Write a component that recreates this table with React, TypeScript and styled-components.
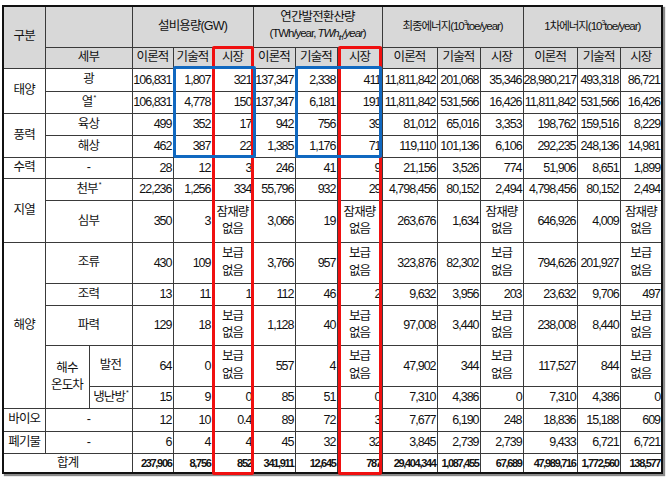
import React from 'react';
import styled, { createGlobalStyle } from 'styled-components';

const GlobalStyle = createGlobalStyle`
  html, body {
    margin: 0;
    padding: 0;
    background: #ffffff;
  }
  body {
    font-family: "Liberation Sans", "Noto Sans CJK KR", sans-serif;
    color: #111111;
  }
`;

type Value = string;

type DataRow = {
  key: string;
  height: number;
  lead: React.ReactNode;
  values: Value[];
};

const NOTES = ['잠재량없음', '보급없음'];

const widths = [42, 44, 43, 41, 39, 41, 42, 42, 45, 55, 43, 43, 54, 43, 42];

const Sup = styled.sup`
  font-size: 7px;
  vertical-align: top;
  position: relative;
  top: -1px;
  margin-left: 1px;
`;

const Page = styled.div`
  padding: 5px 0 0 2px;
`;

const Frame = styled.div`
  position: relative;
  display: inline-block;
`;

const Grid = styled.table`
  border-collapse: collapse;
  table-layout: fixed;
  width: 659px;
  border: 2px solid #111111;
  box-shadow: 2px 2px 1px #8a8a8a;
  font-size: 12.5px;
  letter-spacing: -0.07em;
`;

const Row = styled.tr<{ $h: number }>`
  height: ${(p) => p.$h}px;
`;

const HeadCell = styled.th`
  background: #d8d8d8;
  border: 1px solid #3a3a3a;
  font-weight: 400;
  text-align: center;
  vertical-align: middle;
  padding: 0;
  line-height: 1.25;
  white-space: nowrap;
`;

const Unit = styled.span`
  font-size: 11.5px;
  letter-spacing: -0.09em;
`;

const LabelCell = styled.td`
  border: 1px solid #3a3a3a;
  text-align: center;
  vertical-align: middle;
  padding: 0;
  line-height: 1.3;
  white-space: nowrap;
`;

const NumCell = styled.td<{ $total?: boolean }>`
  border: 1px solid #3a3a3a;
  text-align: right;
  vertical-align: middle;
  padding: 0 1px 0 0;
  white-space: nowrap;
  font-weight: ${(p) => (p.$total ? 700 : 400)};
  font-size: ${(p) => (p.$total ? '11px' : '12.5px')};
  letter-spacing: ${(p) => (p.$total ? '-0.12em' : '-0.08em')};
`;

const NoteCell = styled.td`
  border: 1px solid #3a3a3a;
  text-align: center;
  vertical-align: middle;
  padding: 0;
  line-height: 1.4;
  white-space: nowrap;
`;

const Mark = styled.div<{ $tone: 'red' | 'blue' }>`
  position: absolute;
  box-sizing: border-box;
  border: 3px solid ${(p) => (p.$tone === 'red' ? '#f01010' : '#1068c0')};
  border-radius: 2px;
  z-index: ${(p) => (p.$tone === 'red' ? 1 : 2)};
  pointer-events: none;
`;

const noteText = (v: string) =>
  v === '잠재량없음' ? (
    <>
      잠재량
      <br />
      없음
    </>
  ) : (
    <>
      보급
      <br />
      없음
    </>
  );

const Values = ({ values, total }: { values: Value[]; total?: boolean }) => (
  <>
    {values.map((v, i) =>
      NOTES.includes(v) ? (
        <NoteCell key={i}>{noteText(v)}</NoteCell>
      ) : (
        <NumCell key={i} $total={total}>
          {v}
        </NumCell>
      )
    )}
  </>
);

const rows: DataRow[] = [
  {
    key: 'pv',
    height: 23,
    lead: (
      <>
        <LabelCell rowSpan={2}>태양</LabelCell>
        <LabelCell colSpan={2}>광</LabelCell>
      </>
    ),
    values: ['106,831', '1,807', '321', '137,347', '2,338', '411', '11,811,842', '201,068', '35,346', '28,980,217', '493,318', '86,721'],
  },
  {
    key: 'heat',
    height: 22,
    lead: (
      <LabelCell colSpan={2}>
        열<Sup>*</Sup>
      </LabelCell>
    ),
    values: ['106,831', '4,778', '150', '137,347', '6,181', '191', '11,811,842', '531,566', '16,426', '11,811,842', '531,566', '16,426'],
  },
  {
    key: 'land',
    height: 22,
    lead: (
      <>
        <LabelCell rowSpan={2}>풍력</LabelCell>
        <LabelCell colSpan={2}>육상</LabelCell>
      </>
    ),
    values: ['499', '352', '17', '942', '756', '39', '81,012', '65,016', '3,353', '198,762', '159,516', '8,229'],
  },
  {
    key: 'sea',
    height: 22,
    lead: <LabelCell colSpan={2}>해상</LabelCell>,
    values: ['462', '387', '22', '1,385', '1,176', '71', '119,110', '101,136', '6,106', '292,235', '248,136', '14,981'],
  },
  {
    key: 'hydro',
    height: 21,
    lead: (
      <>
        <LabelCell>수력</LabelCell>
        <LabelCell colSpan={2}>-</LabelCell>
      </>
    ),
    values: ['28', '12', '3', '246', '41', '9', '21,156', '3,526', '774', '51,906', '8,651', '1,899'],
  },
  {
    key: 'shallow',
    height: 22,
    lead: (
      <>
        <LabelCell rowSpan={2}>지열</LabelCell>
        <LabelCell colSpan={2}>
          천부<Sup>*</Sup>
        </LabelCell>
      </>
    ),
    values: ['22,236', '1,256', '334', '55,796', '932', '29', '4,798,456', '80,152', '2,494', '4,798,456', '80,152', '2,494'],
  },
  {
    key: 'deep',
    height: 42,
    lead: <LabelCell colSpan={2}>심부</LabelCell>,
    values: ['350', '3', '잠재량없음', '3,066', '19', '잠재량없음', '263,676', '1,634', '잠재량없음', '646,926', '4,009', '잠재량없음'],
  },
  {
    key: 'current',
    height: 41,
    lead: (
      <>
        <LabelCell rowSpan={5}>해양</LabelCell>
        <LabelCell colSpan={2}>조류</LabelCell>
      </>
    ),
    values: ['430', '109', '보급없음', '3,766', '957', '보급없음', '323,876', '82,302', '보급없음', '794,626', '201,927', '보급없음'],
  },
  {
    key: 'tidal',
    height: 22,
    lead: <LabelCell colSpan={2}>조력</LabelCell>,
    values: ['13', '11', '1', '112', '46', '2', '9,632', '3,956', '203', '23,632', '9,706', '497'],
  },
  {
    key: 'wave',
    height: 40,
    lead: <LabelCell colSpan={2}>파력</LabelCell>,
    values: ['129', '18', '보급없음', '1,128', '40', '보급없음', '97,008', '3,440', '보급없음', '238,008', '8,440', '보급없음'],
  },
  {
    key: 'otec',
    height: 41,
    lead: (
      <>
        <LabelCell rowSpan={2}>
          해수
          <br />
          온도차
        </LabelCell>
        <LabelCell>발전</LabelCell>
      </>
    ),
    values: ['64', '0', '보급없음', '557', '4', '보급없음', '47,902', '344', '보급없음', '117,527', '844', '보급없음'],
  },
  {
    key: 'hvac',
    height: 22,
    lead: (
      <LabelCell>
        냉난방<Sup>*</Sup>
      </LabelCell>
    ),
    values: ['15', '9', '0', '85', '51', '0', '7,310', '4,386', '0', '7,310', '4,386', '0'],
  },
  {
    key: 'bio',
    height: 23,
    lead: (
      <>
        <LabelCell>바이오</LabelCell>
        <LabelCell colSpan={2}>-</LabelCell>
      </>
    ),
    values: ['12', '10', '0.4', '89', '72', '3', '7,677', '6,190', '248', '18,836', '15,188', '609'],
  },
  {
    key: 'waste',
    height: 22,
    lead: (
      <>
        <LabelCell>폐기물</LabelCell>
        <LabelCell colSpan={2}>-</LabelCell>
      </>
    ),
    values: ['6', '4', '4', '45', '32', '32', '3,845', '2,739', '2,739', '9,433', '6,721', '6,721'],
  },
];

const totals = ['237,906', '8,756', '852', '341,911', '12,645', '787', '29,404,344', '1,087,455', '67,689', '47,989,716', '1,772,560', '138,577'];

const App = () => (
  <>
    <GlobalStyle />
    <Page>
      <Frame>
        <Grid>
          <colgroup>
            {widths.map((w, i) => (
              <col key={i} style={{ width: w }} />
            ))}
          </colgroup>
          <thead>
            <Row $h={41}>
              <HeadCell rowSpan={2}>구분</HeadCell>
              <HeadCell colSpan={2} />
              <HeadCell colSpan={3}>설비용량(GW)</HeadCell>
              <HeadCell colSpan={3}>
                연간발전환산량
                <br />
                <Unit>
                  (TWh/year, <i>TWh<sub style={{ fontSize: 7 }}>th</sub>/year</i>)
                </Unit>
              </HeadCell>
              <HeadCell colSpan={3}>
                <Unit>
                  최종에너지(10<sup style={{ fontSize: 7 }}>3</sup>toe/year)
                </Unit>
              </HeadCell>
              <HeadCell colSpan={3}>
                <Unit>
                  1차에너지(10<sup style={{ fontSize: 7 }}>3</sup>toe/year)
                </Unit>
              </HeadCell>
            </Row>
            <Row $h={21}>
              <HeadCell colSpan={2}>세부</HeadCell>
              {[0, 1, 2, 3].map((g) => (
                <React.Fragment key={g}>
                  <HeadCell>이론적</HeadCell>
                  <HeadCell>기술적</HeadCell>
                  <HeadCell>시장</HeadCell>
                </React.Fragment>
              ))}
            </Row>
          </thead>
          <tbody>
            {rows.map((r) => (
              <Row key={r.key} $h={r.height}>
                {r.lead}
                <Values values={r.values} />
              </Row>
            ))}
            <Row $h={20}>
              <LabelCell colSpan={3}>합계</LabelCell>
              <Values values={totals} total />
            </Row>
          </tbody>
        </Grid>
        <Mark $tone="red" style={{ left: 210, top: 41, width: 42, height: 429 }} />
        <Mark $tone="blue" style={{ left: 171, top: 61, width: 83, height: 92 }} />
        <Mark $tone="red" style={{ left: 336, top: 41, width: 44, height: 429 }} />
        <Mark $tone="blue" style={{ left: 293, top: 61, width: 87, height: 92 }} />
      </Frame>
    </Page>
  </>
);

export default App;
